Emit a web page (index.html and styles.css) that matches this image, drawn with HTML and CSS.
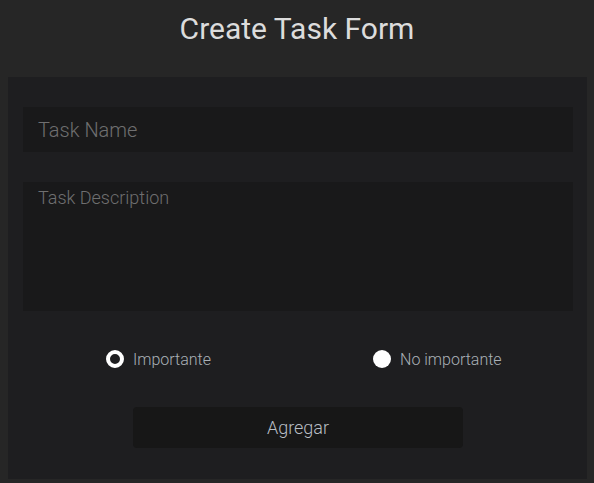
FILE: index.html
```html
<!DOCTYPE html>
<html>
<head>
<meta charset="utf-8">
<link rel="stylesheet" href="styles.css">
</head>
<body>
<h1 class="title">Create Task Form</h1>
<form class="card">
  <div class="field name">Task Name</div>
  <div class="field desc">Task Description</div>
  <div class="radios">
    <label class="radio"><span class="dot checked"></span>Importante</label>
    <label class="radio"><span class="dot"></span>No importante</label>
  </div>
  <div class="actions"><button type="button" class="btn">Agregar</button></div>
</form>
</body>
</html>
```
FILE: styles.css
```css
html, body { margin: 0; padding: 0; }
body {
  background: #262626;
  font-family: Roboto, "Noto Sans", sans-serif;
  width: 594px;
  height: 483px;
  overflow: hidden;
}
.title {
  margin: 0;
  height: 77px;
  box-sizing: border-box;
  padding-top: 9px;
  text-align: center;
  font-weight: 400;
  font-size: 30px;
  line-height: 40px;
  color: #dcdcdc;
}
.card {
  margin: 0 7px 0 8px;
  background: #1e1e20;
  padding: 30px 14px 31px 15px;
  display: flex;
  flex-direction: column;
}
.field {
  background: #19191a;
  color: #6f6f70;
  font-weight: 300;
  font-size: 20px;
  padding-left: 15px;
  box-sizing: border-box;
}
.name { height: 45px; line-height: 47px; }
.desc { height: 129px; margin-top: 30px; padding-top: 5px; line-height: 22px; font-size: 18px; }
.radios {
  display: flex;
  gap: 162px;
  padding-left: 83px;
  margin-top: 38px;
  height: 20px;
  align-items: center;
}
.radio {
  display: flex;
  align-items: center;
  gap: 9px;
  color: #a9b0b6;
  font-size: 16px;
  font-weight: 300;
}
.dot {
  width: 18px;
  height: 18px;
  border-radius: 50%;
  background: #fff;
  box-sizing: border-box;
}
.dot.checked {
  background: #1e1e20;
  border: 4px solid #fff;
}
.actions {
  display: flex;
  justify-content: center;
  margin-top: 38px;
}
.btn {
  width: 330px;
  height: 41px;
  border: none;
  border-radius: 4px;
  background: #171717;
  color: #b8bec4;
  font-family: Roboto, sans-serif;
  font-weight: 300;
  font-size: 18px;
}
```
